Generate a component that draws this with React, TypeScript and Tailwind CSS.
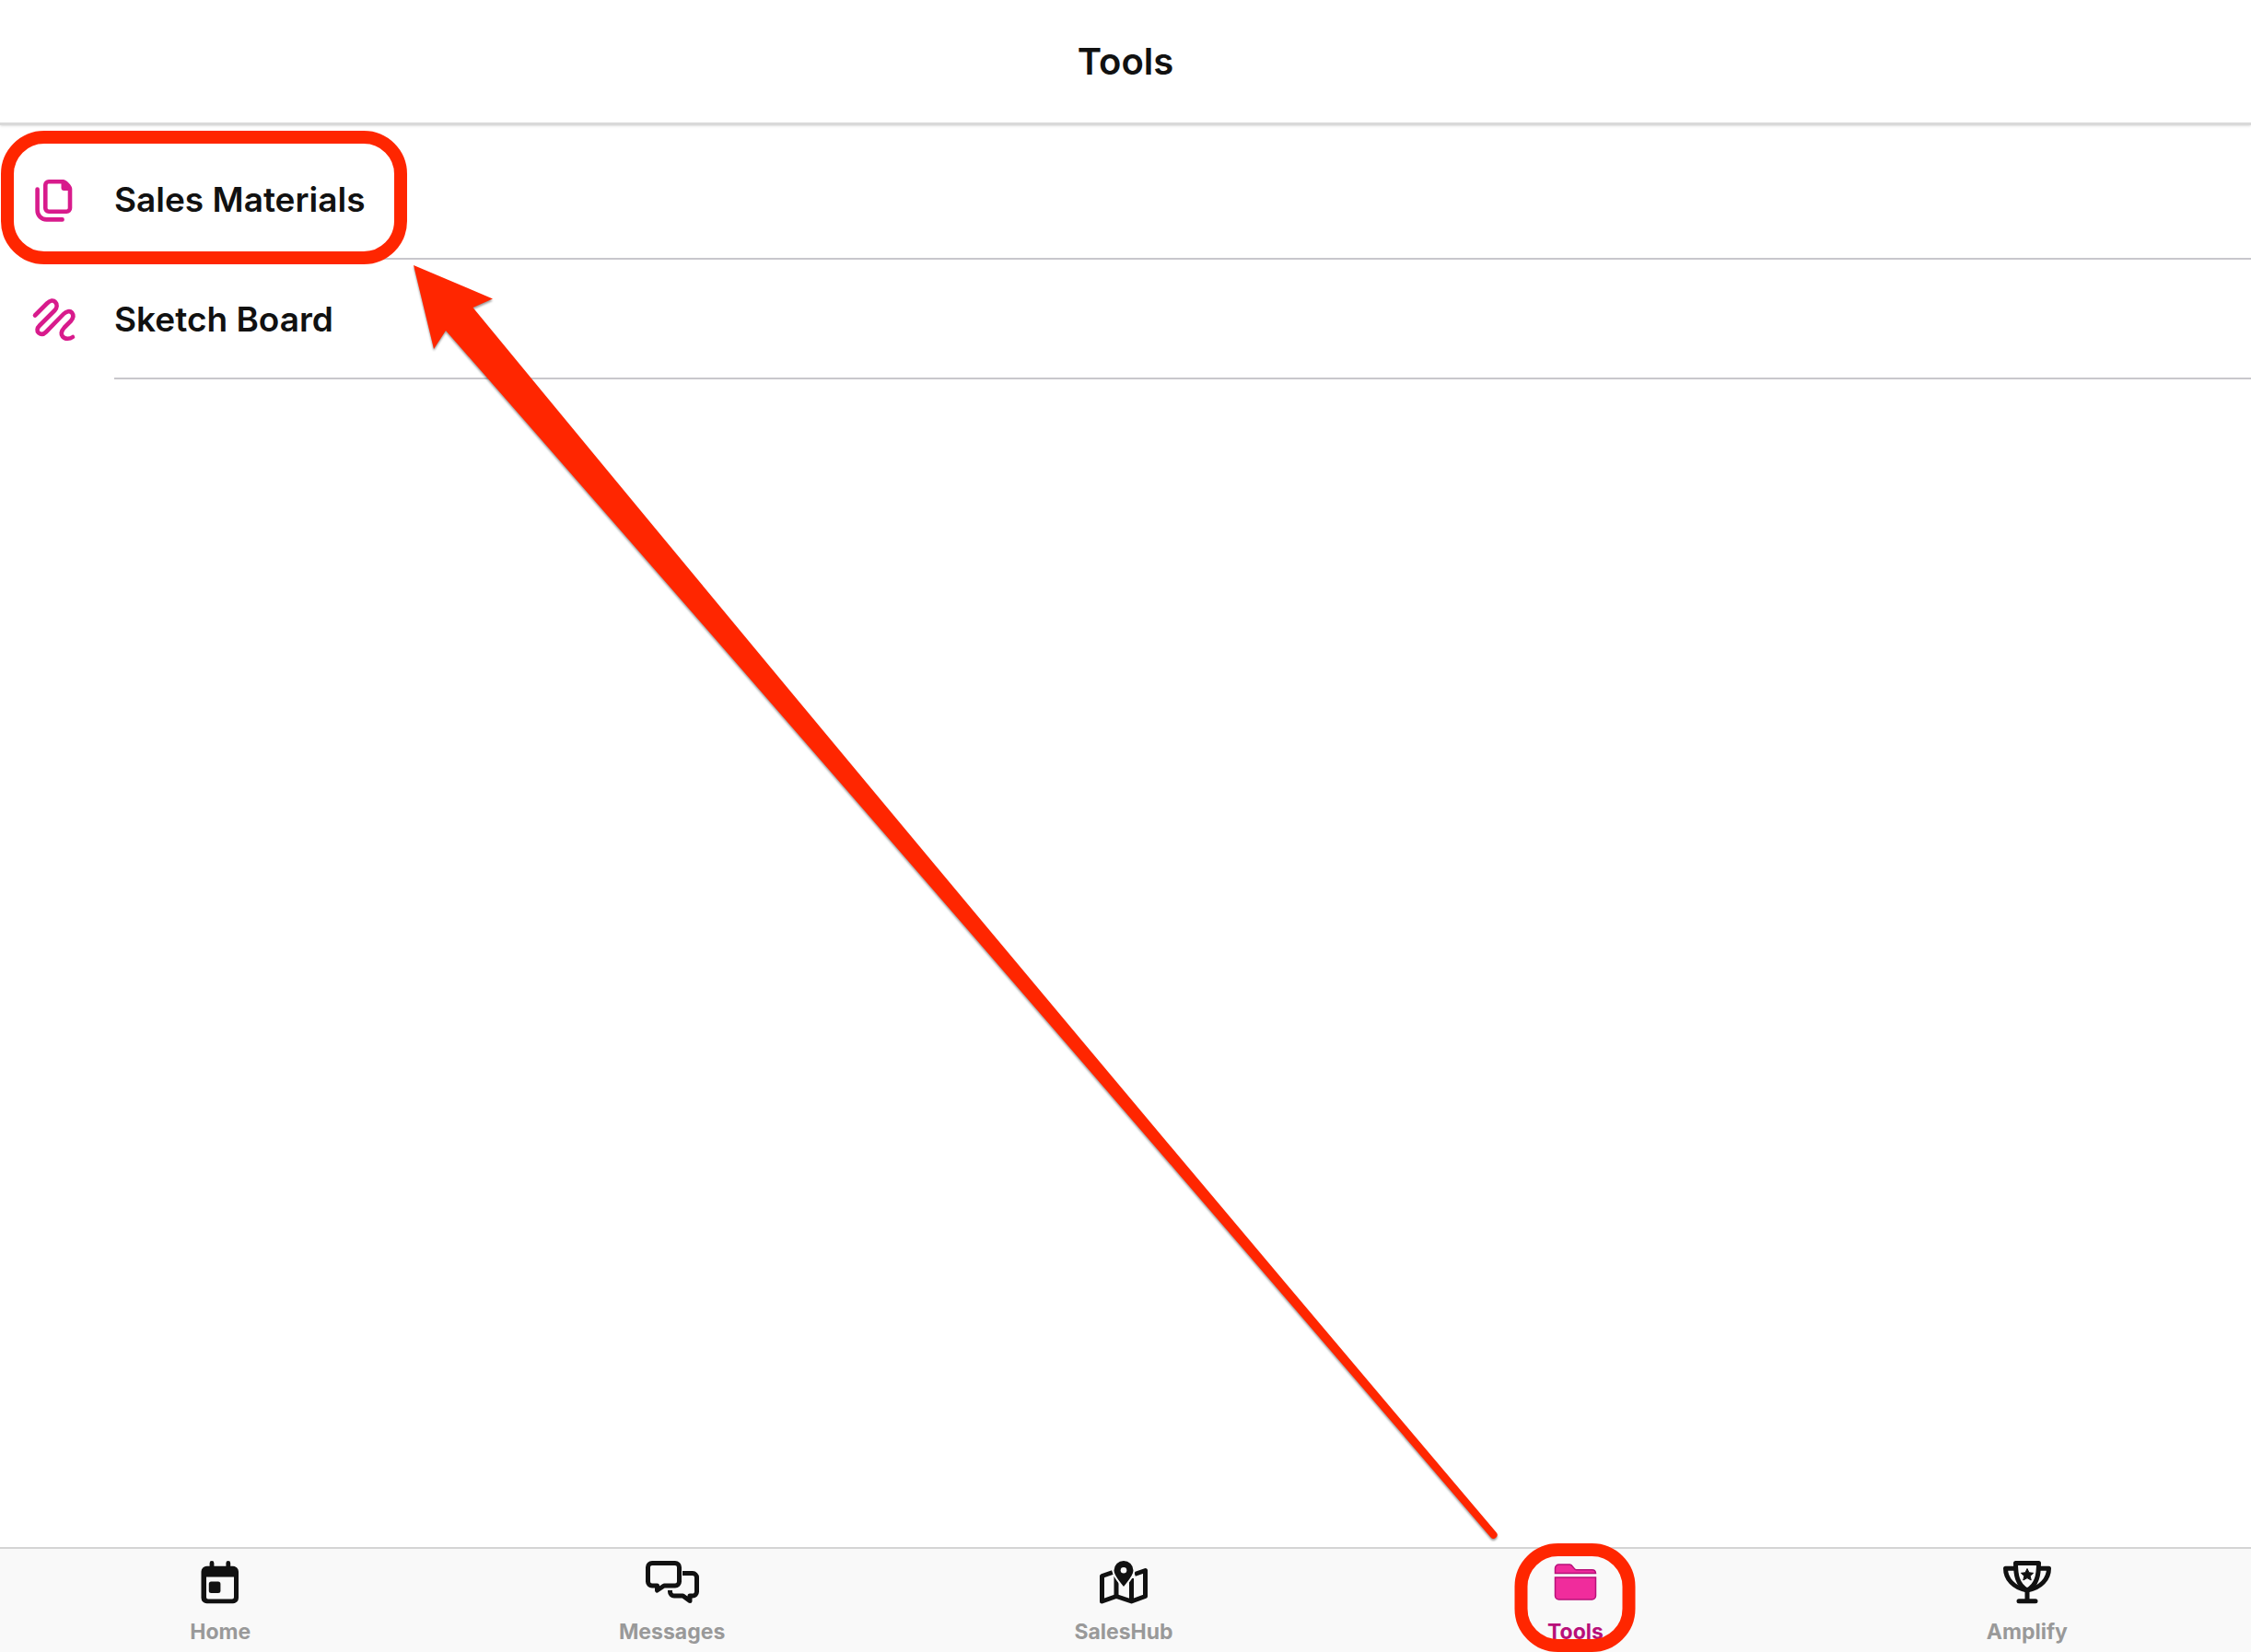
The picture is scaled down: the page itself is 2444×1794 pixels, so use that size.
import React from 'react';

type IconProps = { className?: string };

const PagesIcon: React.FC<IconProps> = ({ className }) => (
    <svg className={className} viewBox="0 0 48 48" fill="none" stroke="currentColor" strokeWidth="4.6" strokeLinecap="round" strokeLinejoin="round">
        <path d="M17 4.300h15.500c2 0 7.500 5.500 7.500 8v20.700a3.700 3.700 0 0 1-3.700 3.700H17a3.700 3.700 0 0 1-3.700-3.700V8A3.700 3.700 0 0 1 17 4.300z" />
        <path d="M31.500 4.500v6.500a2 2 0 0 0 2 2h6z" fill="currentColor" strokeWidth="2" />
        <path d="M4.600 12.600V35c0 6 4 10.400 10 10.400h17" />
    </svg>
);

const ScribbleIcon: React.FC<IconProps> = ({ className }) => (
    <svg className={className} viewBox="0 0 48 48" fill="none" stroke="currentColor" strokeWidth="4.6" strokeLinecap="round" strokeLinejoin="round" overflow="visible">
        <path d="M2 19.500 15 6.500C18.500 3 22 2.500 24 5c2.500 2.500 2 6-.5 9L7 30.500c-3 3-3.200 6-1 8 2.500 2 5.500 1.500 8-1L33 18c3-3 7-4 9-1.500 2 2.500 1.500 6-1 9l-7 7c-4 4.500-4 7.500-2 10 2.500 3 7.500 3 11 .5" />
    </svg>
);

const CalendarIcon: React.FC<IconProps> = ({ className }) => (
    <svg className={className} viewBox="0 0 56 48">
        <path fill="currentColor" fillRule="evenodd" d="M16.600 3.400a2.400 2.400 0 0 1 4.800 0V6.800h13V3.400a2.400 2.400 0 0 1 4.800 0v3.400H42a6 6 0 0 1 6 6v28.500a6 6 0 0 1-6 6H13.500a6 6 0 0 1-6-6V12.800a6 6 0 0 1 6-6h3.100zM13 18.500v22a2 2 0 0 0 2 2h26a2 2 0 0 0 2-2v-22z" />
        <rect x="15.800" y="23.400" width="12.600" height="12.600" rx="2.500" fill="currentColor" />
    </svg>
);

const ChatIcon: React.FC<IconProps> = ({ className }) => (
    <svg className={className} viewBox="0 0 56 48" fill="none" stroke="currentColor" strokeWidth="5" strokeLinejoin="round" overflow="visible">
        <path d="M6 3.400h25a4.500 4.500 0 0 1 4.500 4.500V23.500a4.500 4.500 0 0 1-4.500 4.500H19l-7.500 5V28H6a4.500 4.500 0 0 1-4.500-4.500V7.900A4.500 4.500 0 0 1 6 3.400z" />
        <path d="M39 14.600h11a4.500 4.500 0 0 1 4.500 4.500v15.400a4.500 4.500 0 0 1-4.500 4.500h-3v5.500L39.500 39H30a4.500 4.500 0 0 1-4.500-4.500v-1.500" />
    </svg>
);

const MapIcon: React.FC<IconProps> = ({ className }) => (
    <svg className={className} viewBox="0 0 56 48">
        <g fill="none" stroke="currentColor" strokeWidth="5" strokeLinejoin="round">
            <path d="M16 13.500 4.500 17.500v27.500L20 39.500l16.500 5.500 15-5.500V11.500L40 15.500" />
            <path d="M20 18v21M36.500 20v24" />
        </g>
        <path fill="currentColor" stroke="#f9f9f9" strokeWidth="2" d="M28 30.500C24 25 16.500 18 16.500 11.500a11.500 11.500 0 0 1 23 0c0 6.500-7.500 13.500-11.500 19z" />
        <circle cx="28" cy="11.200" r="3.300" fill="#f9f9f9" />
    </svg>
);

const FolderIcon: React.FC<IconProps> = ({ className }) => (
    <svg className={className} viewBox="0 0 56 48" fill="#f02c9c" stroke="#b8107a" strokeWidth="1.500">
        <path d="M6.500 14.500V9a4 4 0 0 1 4-4h12c3 0 4 5.800 7 5.800h17a4 4 0 0 1 4 3.700z" />
        <path d="M6.500 19h44v20a4 4 0 0 1-4 4h-36a4 4 0 0 1-4-4z" />
    </svg>
);

const TrophyIcon: React.FC<IconProps> = ({ className }) => (
    <svg className={className} viewBox="0 0 56 48">
        <g fill="none" stroke="currentColor" strokeWidth="5" strokeLinecap="round" strokeLinejoin="round">
            <path d="M15.500 3.400h25c0 12-1.500 24-12.500 29.500C17 27.400 15.500 15.400 15.500 3.400z" />
            <path d="M15 9.200H4.500C4.500 20.500 13 30.500 28 33c15-2.500 23.500-12.500 23.500-23.800H41" />
            <path d="M28 33v11M19 44.800h18" />
        </g>
        <path fill="currentColor" stroke="currentColor" strokeLinejoin="round" d="m28 9.500 2 4.300 4.600.5-3.400 3.100 1 4.600-4.200-2.400-4.200 2.400 1-4.600-3.400-3.100 4.600-.5z" />
    </svg>
);

const TOOLS = [
    { label: 'Sales Materials', Icon: PagesIcon, highlighted: true },
    { label: 'Sketch Board', Icon: ScribbleIcon, highlighted: false },
];

const TABS = [
    { label: 'Home', Icon: CalendarIcon, active: false },
    { label: 'Messages', Icon: ChatIcon, active: false },
    { label: 'SalesHub', Icon: MapIcon, active: false },
    { label: 'Tools', Icon: FolderIcon, active: true },
    { label: 'Amplify', Icon: TrophyIcon, active: false },
];

// Guide arrow from the Tools tab up to the Sales Materials row
const GuideArrow: React.FC = () => (
    <svg className="absolute inset-0 w-full h-full pointer-events-none drop-shadow-[0_2px_1px_rgba(0,0,0,0.4)]" viewBox="0 0 2444 1794" preserveAspectRatio="none" fill="#ff2600">
        <path d="M449 288 535 324.500 513.500 334Q1061 999 1624.500 1664a4 4 0 0 1-6 5.500Q1058 1014 484 359L471 379z" />
    </svg>
);

const App: React.FC = () => {
    return (
        <div className="relative flex flex-col min-h-screen overflow-hidden bg-white font-['Inter',sans-serif] text-[#111111]">
            <header className="flex items-center justify-center h-34 border-b-3 border-[#d9d9d9] shadow-sm">
                <h1 className="text-[40px] leading-12 font-semibold">Tools</h1>
            </header>

            <main className="flex-1 pt-4">
                <ul>
                    {TOOLS.map(({ label, Icon, highlighted }) => (
                        <li key={label} className="relative">
                            <button className="flex items-center w-full pl-9 text-left">
                                <Icon className="w-12 h-12 mr-10 text-[#d81b8c]" />
                                <span className="flex-1 flex items-center h-[130px] pt-0.5 border-b-2 border-[#c8c7cc] text-[37px] font-semibold">{label}</span>
                            </button>
                            {highlighted && (
                                <span className="absolute left-px -top-2.5 w-[441px] h-[145px] border-14 border-[#ff2600] rounded-[47px] pointer-events-none" />
                            )}
                        </li>
                    ))}
                </ul>
            </main>

            <nav className="flex -ml-1.5 -mr-0.5 h-[114px] border-t-2 border-[#d4d4d4] bg-[#f9f9f9]">
                {TABS.map(({ label, Icon, active }) => (
                    <button key={label} className="relative flex-1 flex flex-col items-center pt-3">
                        <Icon className="w-14 h-12" />
                        <span className={`mt-4 text-[23px] leading-7 font-bold ${active ? 'text-[#b8107a]' : 'text-[#999999]'}`}>{label}</span>
                        {active && (
                            <span className="absolute left-1/2 -translate-x-1/2 -top-1.5 w-[131px] h-[118px] border-14 border-[#ff2600] rounded-[47px] pointer-events-none" />
                        )}
                    </button>
                ))}
            </nav>

            <GuideArrow />
        </div>
    );
};

export default App;
